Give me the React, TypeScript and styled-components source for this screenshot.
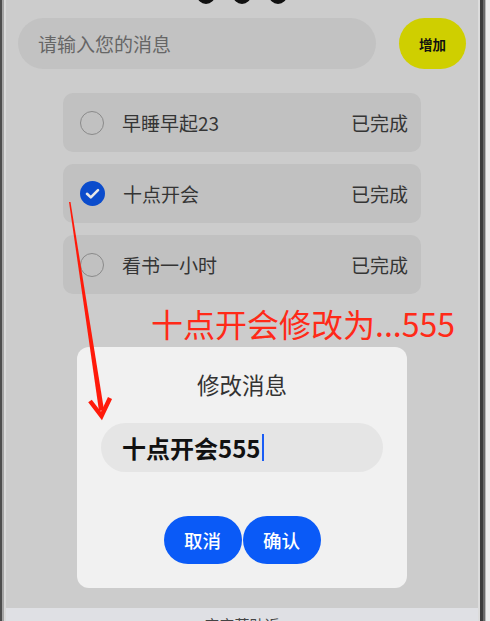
import React from 'react';
import styled, { createGlobalStyle } from 'styled-components';

const CJK = `"Noto Sans CJK SC", "Noto Sans", sans-serif`;

const GlobalStyle = createGlobalStyle`
  html, body {
    margin: 0;
    padding: 0;
    width: 490px;
    height: 621px;
    overflow: hidden;
    background: #cccccc;
    font-family: ${CJK};
  }
`;

const Device = styled.div`
  position: relative;
  display: flex;
  width: 490px;
  height: 621px;
`;

const LeftBezel = styled.div`
  width: 6px;
  background: linear-gradient(to right, #4d4d4d 0 2px, #a4a4a4 2px 4px, #dadada 4px 6px);
`;

const RightBezel = styled.div`
  width: 12px;
  background: linear-gradient(
    to right,
    #dcdcdc 0 2px,
    #3c3c3c 2px 5px,
    #6a6a6a 5px 7px,
    #b8b8b8 7px 8px,
    #ececec 8px 12px
  );
`;

const Screen = styled.div`
  position: relative;
  flex: 1;
  display: flex;
  flex-direction: column;
  background: #cccccc;
  overflow: hidden;
`;

const DotsRow = styled.div`
  display: flex;
  justify-content: center;
  gap: 18px;
  height: 18px;
`;

const Dot = styled.div`
  width: 18px;
  height: 18px;
  margin-top: -14px;
  border-radius: 50%;
  background: #111;
`;

const InputRow = styled.div`
  display: flex;
  align-items: center;
  gap: 23px;
  padding: 0 12px;
  height: 51px;
`;

const MessageInput = styled.div`
  flex: 1;
  height: 51px;
  border-radius: 26px;
  background: #c2c2c2;
  display: flex;
  align-items: center;
  padding-left: 20px;
  font-size: 19px;
  color: #666;
`;

const AddButton = styled.button`
  width: 67px;
  height: 51px;
  border: none;
  border-radius: 26px;
  background: #cfcf00;
  color: #111;
  font-family: ${CJK};
  font-size: 13.5px;
  font-weight: 600;
  padding: 0;
`;

const TodoList = styled.div`
  display: flex;
  flex-direction: column;
  gap: 12px;
  width: 358px;
  margin: 24px auto 0;
`;

const TodoRow = styled.div`
  display: flex;
  align-items: center;
  height: 59px;
  border-radius: 10px;
  background: #c1c1c1;
  padding: 0 13px 0 17px;
  font-size: 19px;
  color: #353535;
`;

const TodoText = styled.span`
  flex: 1;
  margin-left: 18px;
`;

const Radio = styled.div`
  width: 22px;
  height: 22px;
  border-radius: 50%;
  border: 1.5px solid #8a8a8a;
`;

const BottomBand = styled.div`
  margin-top: auto;
  height: 13px;
  background: #dfe0e4;
  overflow: hidden;
  text-align: center;
  font-size: 15px;
  line-height: 15px;
  padding-top: 9px;
  box-sizing: border-box;
  color: #444;
`;

const Note = styled.div`
  position: absolute;
  top: 302px;
  left: 145px;
  font-size: 32px;
  line-height: 42px;
  color: #ff2a18;
  white-space: nowrap;
`;

const Dialog = styled.div`
  position: absolute;
  top: 347px;
  left: 71px;
  width: 330px;
  height: 241px;
  box-sizing: border-box;
  border-radius: 12px;
  background: #f1f1f1;
  display: flex;
  flex-direction: column;
  align-items: center;
`;

const DialogTitle = styled.div`
  margin-top: 22px;
  font-size: 22.5px;
  line-height: 30px;
  color: #333;
`;

const EditField = styled.div`
  margin-top: 24px;
  width: 282px;
  height: 49px;
  border-radius: 25px;
  background: #e5e5e5;
  display: flex;
  align-items: center;
  padding-left: 21px;
  box-sizing: border-box;
  font-size: 24px;
  font-weight: 700;
  color: #111;
`;

const Caret = styled.span`
  width: 2px;
  height: 27px;
  margin-left: 2px;
  background: #1a5cf5;
`;

const ButtonRow = styled.div`
  display: flex;
  gap: 1px;
  margin-top: 44px;
`;

const PillButton = styled.button`
  width: 78px;
  height: 48px;
  border: none;
  border-radius: 24px;
  background: #0a5af7;
  color: #fff;
  font-family: ${CJK};
  font-size: 18.5px;
  font-weight: 500;
  padding: 0;
`;

const ArrowLayer = styled.svg`
  position: absolute;
  left: 0;
  top: 0;
  pointer-events: none;
`;

const CheckedIcon = () => (
  <svg width="25" height="25" viewBox="0 0 25 25">
    <circle cx="12.5" cy="12.5" r="12.5" fill="#0b4ccc" />
    <path d="M7 12.8l3.8 3.6L18 9.2" fill="none" stroke="#e8e8e8" strokeWidth="2.6" strokeLinecap="round" strokeLinejoin="round" />
  </svg>
);

const todos = [
  { text: '早睡早起23', done: false },
  { text: '十点开会', done: true },
  { text: '看书一小时', done: false },
];

export default function App() {
  return (
    <Device>
      <GlobalStyle />
      <LeftBezel />
      <Screen>
        <DotsRow>
          <Dot />
          <Dot />
          <Dot />
        </DotsRow>
        <InputRow>
          <MessageInput>请输入您的消息</MessageInput>
          <AddButton>增加</AddButton>
        </InputRow>
        <TodoList>
          {todos.map((t) => (
            <TodoRow key={t.text}>
              {t.done ? <CheckedIcon /> : <Radio />}
              <TodoText>{t.text}</TodoText>
              <span>已完成</span>
            </TodoRow>
          ))}
        </TodoList>
        <BottomBand>宝宝莫贴近</BottomBand>
        <Note>十点开会修改为...555</Note>
        <Dialog>
          <DialogTitle>修改消息</DialogTitle>
          <EditField>
            十点开会555
            <Caret />
          </EditField>
          <ButtonRow>
            <PillButton>取消</PillButton>
            <PillButton>确认</PillButton>
          </ButtonRow>
        </Dialog>
      </Screen>
      <RightBezel />
      <ArrowLayer width="490" height="621" viewBox="0 0 490 621">
        <polygon points="69,202 70.5,202 104,410 99,411" fill="#ff1a0a" />
        <polyline points="90,401 101.5,416 110,398" fill="none" stroke="#ff1a0a" strokeWidth="4.5" strokeLinejoin="miter" />
      </ArrowLayer>
    </Device>
  );
}
